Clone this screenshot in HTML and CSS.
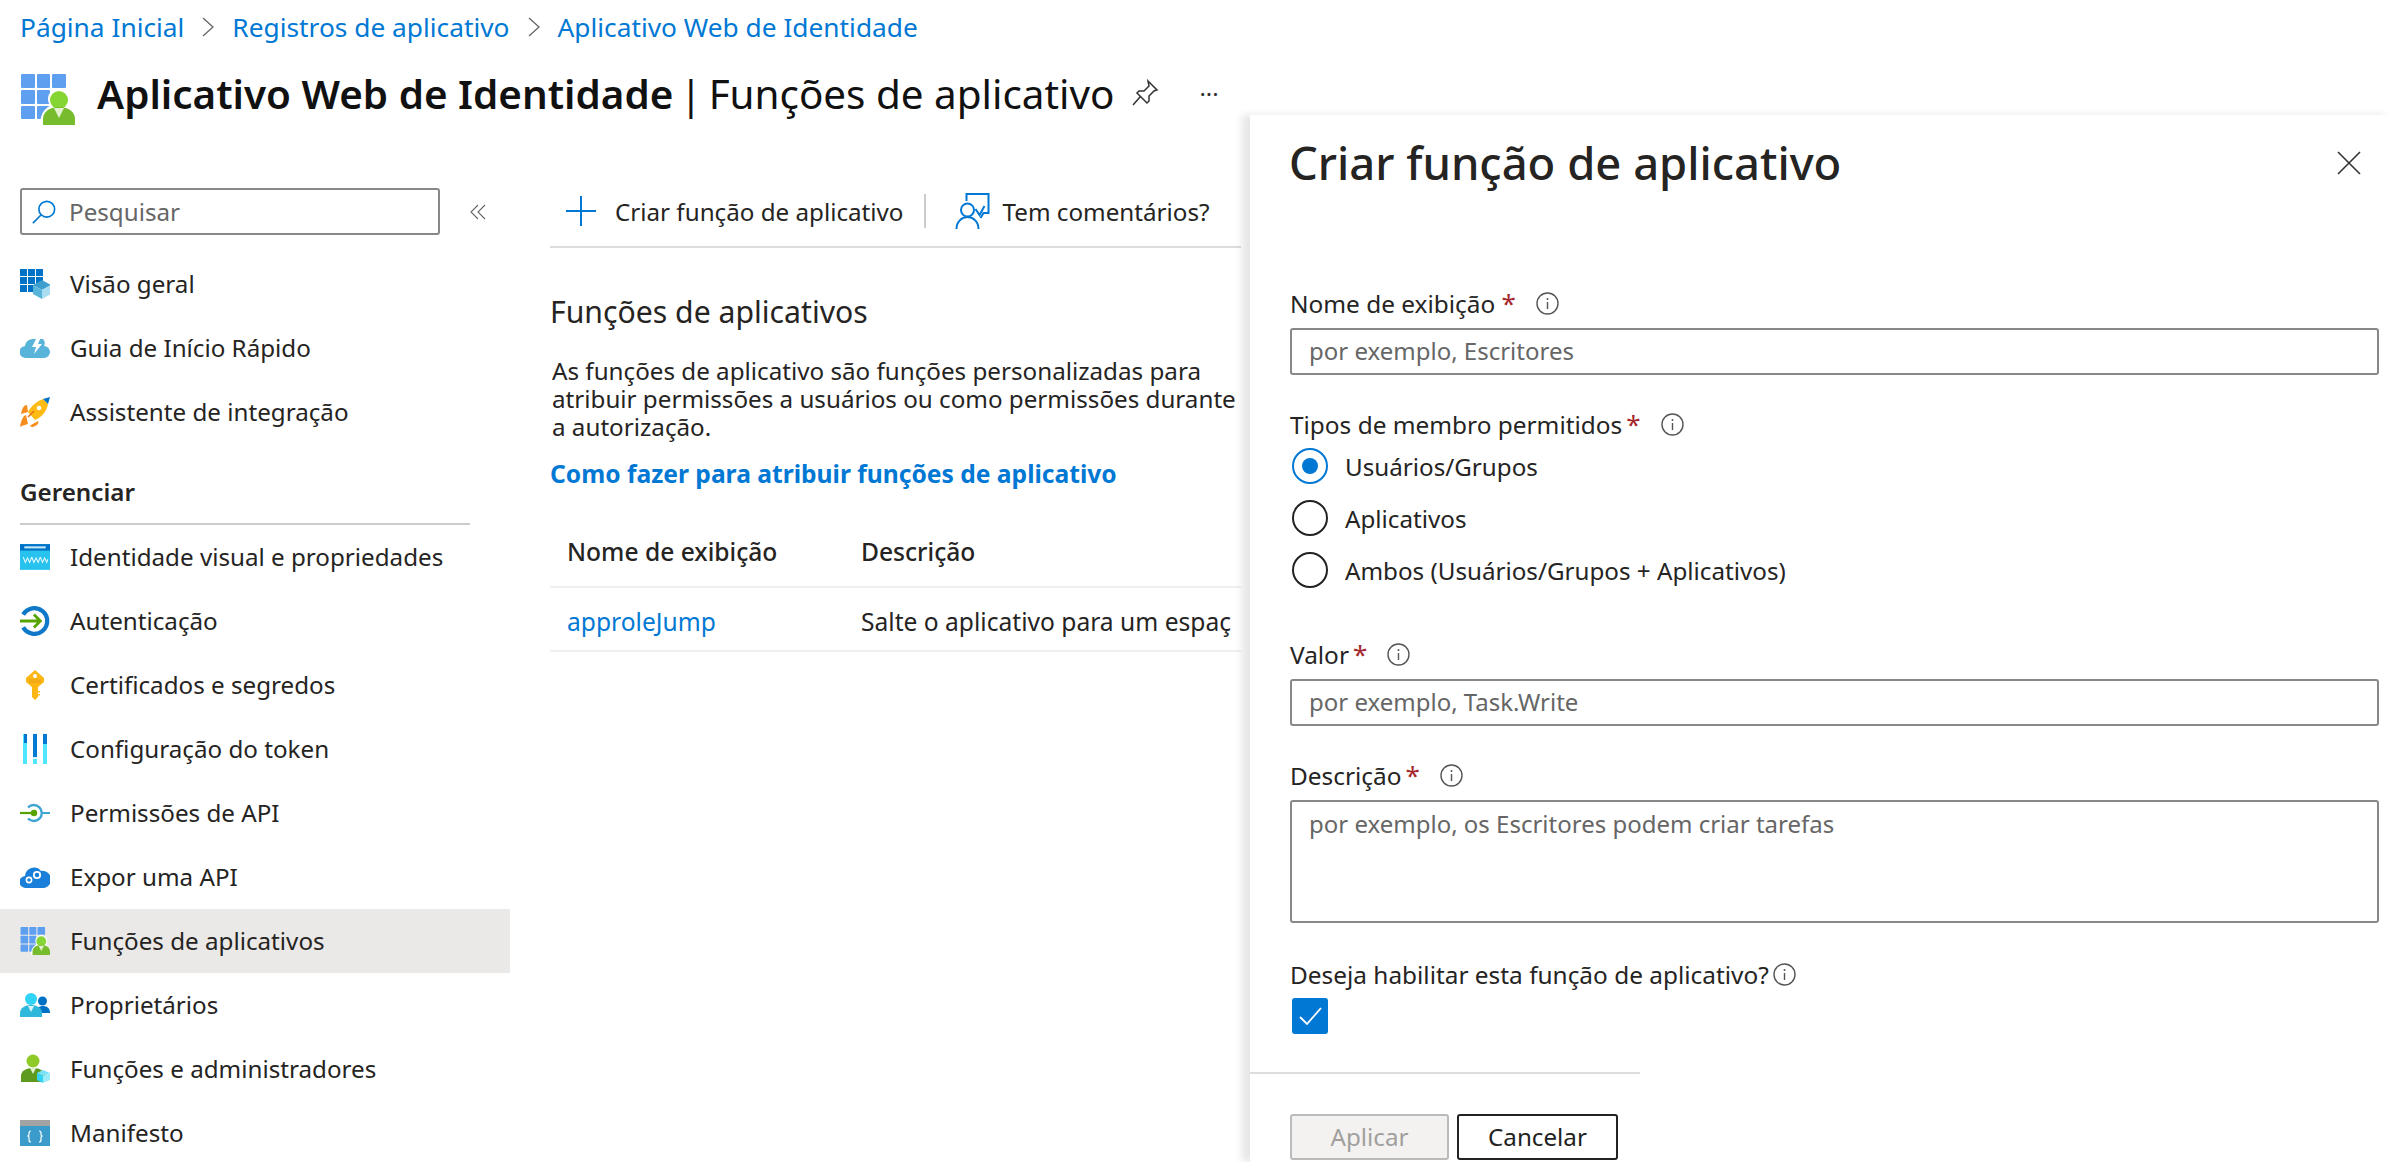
FILE: index.html
```html
<!DOCTYPE html>
<html lang="pt-BR">
<head>
    <meta charset="UTF-8">
    <meta name="viewport" content="width=device-width, initial-scale=1.0">
    <title>Funções de aplicativo</title>
    <link rel="stylesheet" href="styles.css">
</head>
<body>
    <svg class="defs" width="0" height="0" aria-hidden="true">
        <symbol id="i-roles" viewBox="0 0 55 51">
            <g fill="#5ea0ef">
                <rect x="1" y="0" width="14" height="14" rx="1"/><rect x="17" y="0" width="13" height="14" rx="1"/><rect x="32" y="0" width="14" height="14" rx="1"/>
                <rect x="1" y="16" width="14" height="14" rx="1"/><rect x="17" y="16" width="13" height="14" rx="1"/><rect x="32" y="16" width="14" height="14" rx="1"/>
                <rect x="1" y="32" width="14" height="13" rx="1"/><rect x="17" y="32" width="13" height="13" rx="1"/>
            </g>
            <path d="M20 51c0-12 6-21 19-21s16 9 16 21z" fill="#fff"/>
            <circle cx="39" cy="25" r="11" fill="#fff"/>
            <circle cx="39" cy="26" r="9" fill="#86d633"/>
            <path d="M23 51v-6c0-7 6-12 16-12s16 5 16 12v6z" fill="#76bc2d"/>
            <path d="M34 34h10l-5 10z" fill="#e3f1cf"/>
        </symbol>
        <symbol id="i-overview" viewBox="0 0 30 30">
            <g fill="#0072c6">
                <rect x="0" y="0" width="7" height="7"/><rect x="8" y="0" width="7" height="7"/><rect x="16" y="0" width="7" height="7"/>
                <rect x="0" y="8" width="7" height="7"/><rect x="8" y="8" width="7" height="7"/><rect x="16" y="8" width="7" height="7"/>
                <rect x="0" y="16" width="7" height="7"/><rect x="8" y="16" width="7" height="7"/>
            </g>
            <path d="M13 16l9-5 9 5-9 5z" fill="#3e9fce"/>
            <path d="M13 16l9 5v9l-9-5z" fill="#59b4d9"/>
            <path d="M31 16l-9 5v9l9-5z" fill="#a8dcf0"/>
        </symbol>
        <symbol id="i-quick" viewBox="0 0 30 22">
            <path d="M6 21a6 6 0 0 1-1-12 8 8 0 0 1 9-7h9a6 6 0 0 1 1 7 6 6 0 0 1 0 12z" fill="#59b4d9"/>
            <path d="M17 0l-5 10h4l-2 7 8-10h-4l3-7z" fill="#fff"/>
        </symbol>
        <symbol id="i-rocket" viewBox="0 0 30 30">
            <path d="M6 18C3 19 1 23 0 30c3-2 6-2 8-3z" fill="#f78d1e"/>
            <path d="M18 24c1 2 0 4-5 6-3 0-3-1-2-2z" fill="#f78d1e"/>
            <path d="M7 8c-3 0-5 3-6 9l7-2z" fill="#f78d1e"/>
            <path d="M8 15C11 9 17 4 23 2l5 5c-1 7-6 13-13 16z" fill="#fdbb13"/>
            <path d="M23 2l7-2-2 7z" fill="#0072c6"/>
            <circle cx="19" cy="11" r="2.3" fill="#fff"/>
            <path d="M8 20l6-6" stroke="#e9731f" stroke-width="1.6"/>
        </symbol>
        <symbol id="i-www" viewBox="0 0 28 24">
            <rect width="28" height="24" fill="#27c2ee"/>
            <rect width="28" height="6" fill="#0072c6"/>
            <rect x="4" y="2" width="20" height="2" fill="#bfe6f7"/>
            <path d="M3 12l2 5 2-4 2 4 2-5M11 12l2 5 2-4 2 4 2-5M19 12l2 5 2-4 2 4 1-3" fill="none" stroke="#dff6fd" stroke-width="1"/>
        </symbol>
        <symbol id="i-auth" viewBox="0 0 28 28">
            <path d="M3 8a12 12 0 1 1 0 12" fill="none" stroke="#0f78c9" stroke-width="4"/>
            <path d="M0 14h19M13 8l6 6-6 6" fill="none" stroke="#57a300" stroke-width="2.6"/>
        </symbol>
        <symbol id="i-key" viewBox="0 0 20 30">
            <path d="M10 0l9 8v4l-6 5v10l-3 3-3-3V17L1 12V8z" fill="#fcb714"/>
            <circle cx="10" cy="6" r="2" fill="#fff"/>
            <path d="M4 10h12M4 12h12" stroke="#e9961a" stroke-width=".8"/>
            <path d="M13 21h2v1.500h-2zM13 24h2v1.500h-2z" fill="#fcb714"/>
        </symbol>
        <symbol id="i-token" viewBox="0 0 24 30">
            <g fill="#50e6ff">
                <rect x="0" y="0" width="4" height="30"/><rect x="10" y="0" width="4" height="30"/><rect x="20" y="0" width="4" height="30"/>
            </g>
            <g fill="#0078d4">
                <rect x="1" y="0" width="3" height="9"/><rect x="10" y="0" width="4" height="23"/><rect x="20" y="0" width="4" height="10"/>
            </g>
            <rect x="10" y="23" width="4" height="2" fill="#d6f5fc"/>
        </symbol>
        <symbol id="i-api" viewBox="0 0 30 18">
            <path d="M8 3.500a8 8 0 1 1 0 11" fill="none" stroke="#3ea4d3" stroke-width="2.400"/>
            <path d="M22 9h8" stroke="#3ea4d3" stroke-width="2"/>
            <path d="M0 9h12" stroke="#57a300" stroke-width="2.200"/>
            <circle cx="14" cy="9" r="3.200" fill="#57a300"/>
        </symbol>
        <symbol id="i-expose" viewBox="0 0 30 22">
            <path d="M6 22a6 6 0 0 1-1-12 9 9 0 0 1 16-5 7 7 0 0 1 3 17z" fill="#1a7fd8"/>
            <circle cx="9" cy="14" r="2.600" fill="none" stroke="#fff" stroke-width="1.600"/>
            <circle cx="17" cy="9" r="3.200" fill="none" stroke="#fff" stroke-width="1.800"/>
        </symbol>
        <symbol id="i-owners" viewBox="0 0 30 24">
            <circle cx="22.500" cy="8" r="4.500" fill="#0072c6"/>
            <path d="M16 20c0-5 3-7 7-7s7 2 7 7z" fill="#0072c6"/>
            <circle cx="11" cy="6" r="6" fill="#32d4f5"/>
            <path d="M0 24v-4c0-5 5-8 11-8s11 3 11 8v4z" fill="#2fb8dc"/>
            <path d="M8 13h6l-3 6z" fill="#d9f5fc"/>
        </symbol>
        <symbol id="i-admins" viewBox="0 0 30 28">
            <circle cx="13" cy="6" r="6.500" fill="#8fca29"/>
            <path d="M1 27v-6c0-5 5-8 12-8s12 3 12 8v6z" fill="#5e9a20"/>
            <path d="M10 13h6l-3 6z" fill="#e3f1cf"/>
            <path d="M17 18l6-3 7 3-7 3z" fill="#7be3f7"/>
            <path d="M17 18l6 3v7l-6-3z" fill="#32d4f5"/>
            <path d="M30 18l-7 3v7l7-3z" fill="#9cebfa"/>
        </symbol>
        <symbol id="i-manifest" viewBox="0 0 30 26">
            <rect width="30" height="26" fill="#3b9ccb"/>
            <rect width="30" height="6" fill="#a3a3a3"/>
            <path d="M11 11c-2 0-2 1-2 2v1.500c0 1-1 1.500-1 1.500s1 .5 1 1.500V20c0 1 0 2 2 2M19 11c2 0 2 1 2 2v1.500c0 1 1 1.500 1 1.500s-1 .5-1 1.500V20c0 1 0 2-2 2" fill="none" stroke="#fff" stroke-width="1.200"/>
        </symbol>
        <symbol id="i-info" viewBox="0 0 23 23">
            <circle cx="11.500" cy="11.500" r="10.500" fill="none" stroke="#555" stroke-width="1.400"/>
            <path d="M11.500 10v7" stroke="#555" stroke-width="1.400"/>
            <circle cx="11.500" cy="7" r="1" fill="#555"/>
        </symbol>
    </svg>

    <div class="page">
        <nav class="breadcrumb">
            <a href="#">Página Inicial</a>
            <svg class="crumb-sep" viewBox="0 0 12 20"><path d="M1 1l10 9-10 9" fill="none" stroke="#666" stroke-width="1.300"/></svg>
            <a href="#">Registros de aplicativo</a>
            <svg class="crumb-sep" viewBox="0 0 12 20"><path d="M1 1l10 9-10 9" fill="none" stroke="#666" stroke-width="1.300"/></svg>
            <a href="#">Aplicativo Web de Identidade</a>
        </nav>

        <header class="titlebar">
            <svg class="title-icon"><use href="#i-roles"/></svg>
            <h1><strong>Aplicativo Web de Identidade</strong> <span class="pipe">|</span> Funções de aplicativo</h1>
            <svg class="pin" viewBox="0 0 28 28"><path d="M17 2l9 9-3 1-5 5 0 5-2 2-10-10 2-2 5 0 5-5zM9 18l-7 8" fill="none" stroke="#333" stroke-width="1.500"/></svg>
            <span class="more">···</span>
        </header>

        <div class="main">
            <aside class="sidebar">
                <div class="search-row">
                    <div class="search">
                        <svg class="search-icon" viewBox="0 0 26 26"><circle cx="16" cy="10" r="8.500" fill="none" stroke="#0078d4" stroke-width="1.800"/><path d="M10 16l-9 9" stroke="#0078d4" stroke-width="1.800"/></svg>
                        <span>Pesquisar</span>
                    </div>
                    <svg class="collapse" viewBox="0 0 16 16"><path d="M8 1L1 8l7 7M15 1L8 8l7 7" fill="none" stroke="#666" stroke-width="1.100"/></svg>
                </div>
                <ul class="nav">
                    <li><span class="nav-icon"><svg><use href="#i-overview"/></svg></span>Visão geral</li>
                    <li><span class="nav-icon"><svg><use href="#i-quick"/></svg></span>Guia de Início Rápido</li>
                    <li><span class="nav-icon"><svg><use href="#i-rocket"/></svg></span>Assistente de integração</li>
                </ul>
                <div class="nav-heading">Gerenciar</div>
                <ul class="nav">
                    <li><span class="nav-icon"><svg><use href="#i-www"/></svg></span>Identidade visual e propriedades</li>
                    <li><span class="nav-icon"><svg><use href="#i-auth"/></svg></span>Autenticação</li>
                    <li><span class="nav-icon"><svg><use href="#i-key"/></svg></span>Certificados e segredos</li>
                    <li><span class="nav-icon"><svg><use href="#i-token"/></svg></span>Configuração do token</li>
                    <li><span class="nav-icon"><svg><use href="#i-api"/></svg></span>Permissões de API</li>
                    <li><span class="nav-icon"><svg><use href="#i-expose"/></svg></span>Expor uma API</li>
                    <li class="active"><span class="nav-icon"><svg><use href="#i-roles"/></svg></span>Funções de aplicativos</li>
                    <li><span class="nav-icon"><svg><use href="#i-owners"/></svg></span>Proprietários</li>
                    <li><span class="nav-icon"><svg><use href="#i-admins"/></svg></span>Funções e administradores</li>
                    <li><span class="nav-icon"><svg><use href="#i-manifest"/></svg></span>Manifesto</li>
                </ul>
            </aside>

            <section class="content">
                <div class="toolbar">
                    <button class="tool">
                        <svg class="tool-plus" viewBox="0 0 30 30"><path d="M15 0v30M0 15h30" stroke="#0078d4" stroke-width="2"/></svg>
                        Criar função de aplicativo
                    </button>
                    <span class="tool-sep"></span>
                    <button class="tool">
                        <svg class="tool-feedback" viewBox="0 0 34 36"><path d="M11 8V1h22v19h-5l-3 5" fill="none" stroke="#0078d4" stroke-width="2"/><circle cx="12" cy="17" r="6.500" fill="none" stroke="#0078d4" stroke-width="2"/><path d="M1 36c0-7 5-12 11-12s11 5 11 12" fill="none" stroke="#0078d4" stroke-width="2"/><path d="M20 16l4 6 5-9" fill="none" stroke="#0078d4" stroke-width="2"/></svg>
                        Tem comentários?
                    </button>
                </div>
                <h2>Funções de aplicativos</h2>
                <p class="intro">As funções de aplicativo são funções personalizadas para atribuir permissões a usuários ou como permissões durante a autorização.</p>
                <a class="howto" href="#">Como fazer para atribuir funções de aplicativo</a>
                <div class="table">
                    <div class="table-row table-head"><span>Nome de exibição</span><span>Descrição</span></div>
                    <div class="table-row table-body"><a href="#">approleJump</a><span class="cell-clip">Salte o aplicativo para um espaç</span></div>
                </div>
            </section>
        </div>

        <aside class="panel">
            <div class="panel-head">
                <h2>Criar função de aplicativo</h2>
                <svg class="close" viewBox="0 0 24 24"><path d="M1 1l22 22M23 1L1 23" stroke="#333" stroke-width="1.600"/></svg>
            </div>

            <div class="field">
                <label>Nome de exibição <span class="req req-first">*</span><svg class="info"><use href="#i-info"/></svg></label>
                <div class="input">por exemplo, Escritores</div>
            </div>

            <div class="field field-radios">
                <label>Tipos de membro permitidos<span class="req">*</span><svg class="info"><use href="#i-info"/></svg></label>
                <div class="radio checked"><span class="dot"></span>Usuários/Grupos</div>
                <div class="radio"><span class="dot"></span>Aplicativos</div>
                <div class="radio"><span class="dot"></span>Ambos (Usuários/Grupos + Aplicativos)</div>
            </div>

            <div class="field">
                <label>Valor<span class="req">*</span><svg class="info"><use href="#i-info"/></svg></label>
                <div class="input">por exemplo, Task.Write</div>
            </div>

            <div class="field">
                <label>Descrição<span class="req">*</span><svg class="info"><use href="#i-info"/></svg></label>
                <div class="input input-area">por exemplo, os Escritores podem criar tarefas</div>
            </div>

            <div class="field field-check">
                <label>Deseja habilitar esta função de aplicativo?<svg class="info info-near"><use href="#i-info"/></svg></label>
                <span class="check"><svg viewBox="0 0 36 36"><path d="M8 19l7 7 14-16" fill="none" stroke="#fff" stroke-width="1.800"/></svg></span>
            </div>

            <div class="panel-line"></div>

            <div class="actions">
                <button class="btn btn-off">Aplicar</button>
                <button class="btn">Cancelar</button>
            </div>
        </aside>
    </div>
</body>
</html>
```

FILE: styles.css
```css
* {
    margin: 0;
    padding: 0;
    box-sizing: border-box;
}

body {
    font-family: "Noto Sans", "Open Sans", sans-serif;
    font-size: 24.2px;
    color: #252423;
    background: white;
    overflow: hidden;
}

a {
    color: #0078d4;
    text-decoration: none;
}

ul {
    list-style: none;
}

.defs {
    position: absolute;
}

.page {
    position: relative;
    width: 2393px;
    height: 1162px;
    overflow: hidden;
}

/* topo */
.breadcrumb {
    height: 54px;
    padding-left: 20px;
    display: flex;
    align-items: center;
    gap: 18px;
    font-size: 26.3px;
}

.crumb-sep {
    width: 12px;
    height: 20px;
}

.titlebar {
    height: 78px;
    margin-bottom: 56px;
    padding-left: 20px;
    display: flex;
    align-items: center;
}

.title-icon {
    width: 55px;
    height: 51px;
    margin: 12px 22px 0 0;
}

h1 {
    font-size: 40.4px;
    font-weight: 400;
    color: #111;
    white-space: nowrap;
}

h1 strong {
    font-weight: 600;
}

.pipe {
    margin: 0 -4px;
}

.pin {
    width: 28px;
    height: 28px;
    margin-left: 17px;
}

.more {
    margin-left: 40px;
    font-size: 24px;
    color: #333;
}

.main {
    display: flex;
}

/* menu lateral */
.sidebar {
    width: 510px;
    flex-shrink: 0;
}

.search-row {
    display: flex;
    align-items: center;
    margin-bottom: 17px;
    padding-left: 20px;
}

.search {
    width: 420px;
    height: 47px;
    border: 2px solid #8a8886;
    border-radius: 3px;
    display: flex;
    align-items: center;
    padding-left: 10px;
    gap: 13px;
    color: #666;
}

.search-icon {
    width: 24px;
    height: 24px;
}

.collapse {
    width: 16px;
    height: 16px;
    margin-left: 30px;
}

.nav li {
    height: 64px;
    display: flex;
    align-items: center;
    padding: 0 0 2px 20px;
    white-space: nowrap;
}

.nav li.active {
    background: #ebe9e7;
}

.nav-icon {
    width: 30px;
    height: 30px;
    margin: 2px 20px 0 0;
    flex-shrink: 0;
}

.nav-icon svg {
    width: 30px;
    height: 30px;
    display: block;
}

.nav-heading {
    width: 450px;
    height: 66px;
    margin: 15px 0 0 20px;
    border-bottom: 2px solid #ccc;
    display: flex;
    align-items: center;
    font-weight: 600;
}

/* area central */
.content {
    width: 691px;
    margin-left: 40px;
    overflow: hidden;
}

.toolbar {
    height: 60px;
    padding-bottom: 12px;
    border-bottom: 2px solid #ddd;
    display: flex;
    align-items: center;
}

.tool {
    border: none;
    background: none;
    font: inherit;
    color: inherit;
    display: flex;
    align-items: center;
    white-space: nowrap;
}

.tool-plus {
    width: 30px;
    height: 30px;
    margin: 0 19px 0 16px;
}

.tool-feedback {
    width: 35px;
    height: 36px;
    margin-right: 13px;
}

.tool-sep {
    width: 2px;
    height: 34px;
    background: #ccc;
    margin: 0 29px 0 20px;
}

.content h2 {
    margin-top: 44px;
    font-size: 30.2px;
    font-weight: 400;
    line-height: 40px;
}

.intro {
    margin-top: 25px;
    line-height: 28px;
    padding-left: 2px;
    width: 690px;
}

.howto {
    display: block;
    margin-top: 19px;
    line-height: 28px;
    font-size: 24.6px;
    font-weight: 700;
    white-space: nowrap;
}

.table {
    margin-top: 30px;
}

.table-row {
    display: grid;
    grid-template-columns: 311px 1fr;
    height: 64px;
    align-items: center;
    border-bottom: 2px solid #f0f0f0;
    font-size: 24.6px;
}

.table-row > * {
    padding-left: 17px;
    white-space: nowrap;
}

.table-row > span:last-child {
    padding-left: 0;
}

.table-head {
    height: 70px;
    padding-bottom: 2px;
    font-weight: 500;
}

.table-body {
    padding-top: 5px;
}

.cell-clip {
    overflow: hidden;
    width: 370px;
}

/* painel lateral */
.panel {
    position: absolute;
    top: 115px;
    left: 1250px;
    right: 0;
    bottom: 0;
    padding: 18px 14px 0 40px;
    background: white;
    box-shadow: -8px 0 8px rgba(0, 0, 0, 0.1);
}

.panel-head {
    height: 60px;
    margin-bottom: 96px;
    display: flex;
    align-items: center;
    justify-content: space-between;
}

.panel-head h2 {
    margin: -2px 0 0 -1px;
    font-size: 45.4px;
    font-weight: 500;
    line-height: 60px;
}

.close {
    width: 24px;
    height: 24px;
    margin-right: 18px;
}

.field {
    margin-bottom: 35px;
}

.field-radios {
    margin-bottom: 52px;
}

.field-check {
    margin-bottom: 38px;
}

.field label {
    height: 30px;
    margin-bottom: 9px;
    padding-bottom: 2px;
    display: flex;
    align-items: center;
    white-space: pre;
    font-size: 24.4px;
}

.field-radios label,
.field-check label {
    margin-bottom: 8px;
}

.req {
    color: #a4262c;
    margin-left: 4px;
    font-size: 26px;
}

.req-first {
    margin-left: 0;
}

.info {
    width: 23px;
    height: 23px;
    margin-left: 20px;
}

.info-near {
    margin-left: 4px;
}

.input {
    height: 47px;
    padding: 0 0 2px 17px;
    border: 2px solid #8a8886;
    border-radius: 3px;
    display: flex;
    align-items: center;
    color: #666;
    font-size: 24px;
}

.input-area {
    height: 123px;
    margin-bottom: 37px;
    padding-top: 5px;
    align-items: flex-start;
}

.radio {
    height: 36px;
    margin-bottom: 16px;
    padding-left: 2px;
    display: flex;
    align-items: center;
}

.radio:last-child {
    margin-bottom: 0;
}

.dot {
    width: 36px;
    height: 36px;
    margin-right: 17px;
    border: 2px solid #222;
    border-radius: 50%;
    display: flex;
    align-items: center;
    justify-content: center;
}

.radio.checked .dot {
    border-color: #0078d4;
}

.radio.checked .dot::after {
    content: "";
    width: 16px;
    height: 16px;
    border-radius: 50%;
    background: #0078d4;
}

.check {
    display: block;
    width: 36px;
    height: 36px;
    margin-left: 2px;
    border-radius: 3px;
    background: #0078d4;
}

.check svg {
    display: block;
}

.panel-line {
    width: 390px;
    height: 2px;
    margin-left: -40px;
    background: #ddd;
}

.actions {
    margin-top: 40px;
    display: flex;
    gap: 8px;
}

.btn {
    width: 161px;
    height: 46px;
    padding-bottom: 2px;
    border: 2px solid #222;
    border-radius: 3px;
    background: white;
    font: inherit;
    color: #222;
}

.btn-off {
    width: 159px;
    border-color: #bbb;
    background: #f3f2f1;
    color: #a19f9d;
}
```
